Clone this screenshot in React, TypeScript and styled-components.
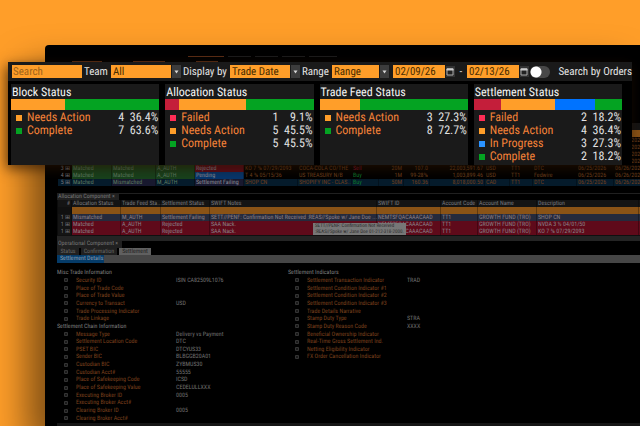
import React from "react";
import styled, { createGlobalStyle } from "styled-components";

const Global = createGlobalStyle`
  *, *::before, *::after { box-sizing: border-box; }
  body { margin: 0; background: #ff9e29; text-rendering: geometricPrecision; }
  button, input, select { font: inherit; margin: 0; padding: 0; border: 0; border-radius: 0; text-rendering: inherit; }
  table { border-collapse: collapse; border-spacing: 0; }
  h2, h3, dl, dd, dt, ul { margin: 0; padding: 0; font: inherit; }
  ul { list-style: none; }
`;

const sans = `"Roboto Condensed", Roboto, "Noto Sans", sans-serif`;

const Page = styled.main`
  position: relative;
  display: flex;
  min-height: 100vh;
  padding: 45px 0 0 45px;
  overflow: hidden;
  background: #ff9e29;
  font-family: ${sans};
`;

const Terminal = styled.section`
  flex: 1;
  min-width: 0;
  display: flex;
  flex-direction: column;
  padding-left: 12px;
  background: #000;
  border-top-left-radius: 4px;
  box-shadow: -18px 22px 36px 0 rgba(0, 0, 0, 0.5);
  font-size: 6px;
  line-height: 7px;
  color: #6a6a6a;
`;

const TopStrip = styled.div`
  flex: none;
  height: 78px;
  padding-top: 11px;
  display: flex;
  flex-direction: column;
  gap: 4px;
`;

const EdgeRow = styled.div<{ $inset: number; $gap: number }>`
  display: flex;
  gap: ${(p) => p.$gap}px;
  padding-left: ${(p) => p.$inset}px;
`;

const TabEdge = styled.span<{ $on?: boolean; $w: number }>`
  width: ${(p) => p.$w}px;
  height: 1px;
  background: ${(p) => (p.$on ? "#5a2c14" : "#1c1c1c")};
`;

const Grid = styled.table`
  table-layout: fixed;
  width: 100%;
  flex: none;
`;

type Tone = "plain" | "green" | "red" | "blue" | "navy" | "slate" | "filter" | "head" | "select";
const tones: Record<Tone, string> = {
  plain: "transparent",
  green: "#17431d",
  red: "#5f0a1a",
  blue: "#05376f",
  navy: "#191a30",
  slate: "#252a3c",
  filter: "#8a5316",
  head: "#141414",
  select: "#061c2c",
};

const Row = styled.tr<{ $tone?: Tone }>`
  height: 7px;
  background: ${(p) => tones[p.$tone ?? "plain"]};
`;

const Cell = styled.td<{ $tone?: Tone; $ink?: string; $right?: boolean }>`
  height: 7px;
  padding: 0 1px;
  white-space: nowrap;
  text-align: ${(p) => (p.$right ? "right" : "left")};
  color: ${(p) => p.$ink ?? "#77777c"};
  background: ${(p) => tones[p.$tone ?? "plain"]};
  border-left: 1px solid rgba(0, 0, 0, 0.3);
  line-height: 7px;
`;

const HeadCell = styled(Cell).attrs({ as: "th" })`
  font-weight: 400;
`;

const PanelTitle = styled.h2<{ $gap?: boolean }>`
  flex: none;
  display: flex;
  height: 7px;
  border-top: ${(p) => (p.$gap ? "1px solid #202020" : "0")};
  span {
    min-width: 56px;
    padding: 0 4px 0 1px;
    background: #202020;
    color: #777;
    line-height: 6px;
  }
`;

const Spacer = styled.div`
  flex: none;
  height: 7px;
`;

const ScrollBar = styled.div`
  flex: none;
  height: 5px;
  background: #242424;
`;

const AllocationBox = styled.div`
  flex: none;
  position: relative;
  height: 36px;
  background: #101010;
`;

const Tooltip = styled.div`
  position: absolute;
  left: 256px;
  top: 23px;
  padding: 0 2px;
  background: #777;
  color: #2b2b2b;
  font-size: 5px;
  line-height: 6px;
  white-space: nowrap;
`;

const Tabs = styled.div`
  flex: none;
  display: flex;
  gap: 2px;
  height: 7px;
`;

const Tab = styled.button<{ $on?: boolean }>`
  width: ${(p) => (p.$on ? 32 : 36)}px;
  height: 7px;
  line-height: 7px;
  color: ${(p) => (p.$on ? "#222" : "#666")};
  background: ${(p) => (p.$on ? "#606060" : "#202020")};
  &:first-child { width: 22px; }
`;

const SubBar = styled.div`
  flex: none;
  height: 8px;
  background: #464646;
  display: flex;
  h3 {
    width: 47px;
    padding-left: 3px;
    color: #8a9db0;
    background: #053b68;
    line-height: 8px;
    white-space: nowrap;
  }
`;

const Details = styled.div`
  flex: 1;
  display: grid;
  grid-template-columns: 231px minmax(0, 1fr);
  padding: 6px 0 1px;
`;

const FieldList = styled.dl`
  display: grid;
  grid-template-rows: repeat(20, minmax(7px, 1fr));
`;

const FieldHeading = styled.dt`
  color: #7e7e7e;
  align-self: center;
`;

const Field = styled.div`
  display: grid;
  grid-template-columns: 19px 100px minmax(0, 1fr);
  align-items: center;
  white-space: nowrap;
  svg { margin-left: 7px; }
  dt { color: #7c401d; }
  dd { color: #707070; }
`;

const FootBar = styled.div`
  flex: none;
  height: 3px;
  background: #161616;
`;

/* Filter and summary panel floating over the terminal */
const Overlay = styled.section`
  position: absolute;
  top: 62px;
  left: 8px;
  right: 8px;
  background: #000;
  box-shadow: -2px 4px 12px rgba(40, 18, 0, 0.7);
  color: #e2e2e2;
`;

const Toolbar = styled.form`
  display: flex;
  align-items: center;
  height: 19px;
  padding-left: 4px;
  background: #1a1a1a;
  font-size: 11px;
  line-height: 13px;
  white-space: nowrap;
`;

const SearchInput = styled.input`
  width: 70px;
  height: 13px;
  padding-left: 1px;
  background: #ff9e29;
  color: #3a2400;
  &::placeholder { color: #a0641a; opacity: 1; }
`;

const Caption = styled.label`
  padding: 0 3px 0 2px;
`;

const SelectBox = styled.span<{ $w: number }>`
  position: relative;
  display: flex;
  width: ${(p) => p.$w}px;
  height: 13px;
  select {
    appearance: none;
    width: 100%;
    height: 13px;
    padding: 0 10px 0 2px;
    background: linear-gradient(to left, #3c3c3c 9px, #1a1a1a 9px, #1a1a1a 10px, #ff9e29 10px);
    color: #4a2d00;
  }
  svg {
    position: absolute;
    right: 2px;
    top: 5px;
    pointer-events: none;
  }
`;

const DateBox = styled.span`
  display: flex;
  align-items: center;
  gap: 1px;
  input {
    width: 52px;
    height: 13px;
    padding-left: 2px;
    background: #ff9e29;
    color: #4a2d00;
  }
  button {
    display: flex;
    width: 9px;
    height: 11px;
    align-items: center;
    justify-content: center;
    background: #333;
  }
`;

const Dates = styled.div`
  display: flex;
  margin-left: 4px;
`;

const Dash = styled.span`
  width: 12px;
  text-align: center;
`;

const Switch = styled.label`
  display: flex;
  flex: 1;
  align-items: center;
  justify-content: space-between;
  padding-left: 1px;
  input {
    appearance: none;
    width: 20px;
    height: 12px;
    border-radius: 6px;
    background: radial-gradient(circle at 6px 6px, #fff 5px, #484848 6px);
  }
`;

const Cards = styled.div`
  display: grid;
  grid-template-columns: repeat(4, 1fr);
  column-gap: 6px;
  padding: 3px 10px 0 3px;
`;

const Card = styled.article`
  height: 81px;
  background: #1a1a1a;
  font-size: 12px;
`;

const CardTitle = styled.h2`
  height: 15px;
  padding: 1px 0 0 1px;
  color: #f4f4f4;
  line-height: 15px;
`;

const Bar = styled.div`
  display: flex;
  height: 11px;
`;

const Segment = styled.span<{ $color: string; $share: number }>`
  flex: ${(p) => p.$share} 0 0;
  background: ${(p) => p.$color};
`;

const Legend = styled.ul`
  padding-top: 1px;
`;

const LegendRow = styled.li<{ $color: string }>`
  display: grid;
  grid-template-columns: 11px 1fr auto 34px;
  align-items: center;
  height: 13px;
  padding: 0 1px 0 5px;
  line-height: 13px;
  &::before {
    content: "";
    width: 6px;
    height: 6px;
    background: ${(p) => p.$color};
  }
  span { color: #f58238; }
  b { font-weight: 400; text-align: right; }
`;

const Arrow = () => (
  <svg width="5" height="4" viewBox="0 0 5 4" aria-hidden="true">
    <path d="M0.5 0.5h4L2.5 3.5z" fill="#d8d8d8" />
  </svg>
);

const Calendar = () => (
  <svg width="8" height="9" viewBox="0 0 8 9" aria-hidden="true">
    <path d="M1 1.5h6v6.500H1z" fill="#222" stroke="#aaa" />
    <path d="M0.500 2h7v1.500h-7z" fill="#ccc" />
  </svg>
);

const FieldIcon = () => (
  <svg width="4" height="4" viewBox="0 0 4 4" aria-hidden="true">
    <path d="M0.5 0.5h3v3h-3zM1 2h2" fill="none" stroke="#343434" />
  </svg>
);

const FAIL = "#c41e3a";
const NEED = "#ff9e29";
const DONE = "#04a322";
const PROG = "#0073ff";

const dots: Record<string, string> = { [FAIL]: "#ff2d55", [PROG]: "#2b93ff" };

type Stat = [string, number, string, string];
const cards: { title: string; rows: Stat[] }[] = [
  { title: "Block Status", rows: [["Needs Action", 4, "36.4%", NEED], ["Complete", 7, "63.6%", DONE]] },
  {
    title: "Allocation Status",
    rows: [["Failed", 1, "9.1%", FAIL], ["Needs Action", 5, "45.5%", NEED], ["Complete", 5, "45.5%", DONE]],
  },
  { title: "Trade Feed Status", rows: [["Needs Action", 3, "27.3%", NEED], ["Complete", 8, "72.7%", DONE]] },
  {
    title: "Settlement Status",
    rows: [
      ["Failed", 2, "18.2%", FAIL],
      ["Needs Action", 4, "36.4%", NEED],
      ["In Progress", 3, "27.3%", PROG],
      ["Complete", 2, "18.2%", DONE],
    ],
  },
];

const tradeCols = [14, 40, 44, 39, 49, 54, 54, 27, 25, 26, 55, 25, 23, 44, 37];
const trades = [
  { no: "3", cells: ["Matched", "Matched", "A_AUTH", "Rejected", "KO 7 ⅜ 07/29/2093", "COCA-COLA CO/THE", "Sell", "20M", "107.0", "22,003,591.67", "USD", "TT1", "DTC", "06/25/2026", "06/26/202"], tone: "red" as Tone },
  { no: "4", cells: ["Matched", "Matched", "A_AUTH", "Pending", "T 4 ⅜ 05/15/36", "US TREASURY N/B", "Buy", "1M", "99-28⅜", "1,003,899.46", "USD", "TT1", "Fedwire", "06/25/2026", "06/26/202"], tone: "blue" as Tone },
  { no: "5", cells: ["Matched", "Mismatched", "M_AUTH", "Settlement Failing", "SHOP CN", "SHOPIFY INC - CLAS..", "Buy", "50M", "160.36", "8,018,000.50", "CAD", "TT1", "DTC", "06/25/2026", "06/26/202"], tone: "navy" as Tone },
];

const allocCols = [14, 49, 40, 49, 167, 64, 37, 59, 102];
const allocHeads = ["Allocation Status", "Trade Feed Sta...", "Settlement Status", "SWIFT Notes", "SWIFT ID", "Account Code", "Account Name", "Description"];
const allocs = [
  ["Mismatched", "M_AUTH", "Settlement Failing", "SETT//PENF: Confirmation Not Received :REAS//Spoke w/ Jane Doe ...", "NEMTSFQACAAACAAD", "TT1", "GROWTH FUND (TRO)", "SHOP CN"],
  ["Matched", "A_AUTH", "Rejected", "SAA Nack.", "NEMTSFQACAAACAAD", "TT1", "GROWTH FUND (TRO)", "NVDA 3 ½ 04/01/50"],
  ["Matched", "A_AUTH", "Rejected", "SAA Nack.", "NEMTSFQACAAACAAD", "TT1", "GROWTH FUND (TRO)", "KO 7 ⅜ 07/29/2093"],
];

type Entry = [string, string?] | string;
const leftFields: Entry[] = [
  "Misc Trade Information",
  ["Security ID", "ISIN CA82509L1076"], ["Place of Trade Code"], ["Place of Trade Value"],
  ["Currency to Transact", "USD"], ["Trade Processing Indicator"], ["Trade Linkage"],
  "Settlement Chain Information",
  ["Message Type", "Delivery vs Payment"], ["Settlement Location Code", "DTC"], ["PSET BIC", "DTCYUS33"],
  ["Sender BIC", "BLBGGB20A01"], ["Custodian BIC", "ZYBMUS30"], ["Custodian Acct#", "55555"],
  ["Place of Safekeeping Code", "ICSD"], ["Place of Safekeeping Value", "CEDELULLXXX"],
  ["Executing Broker ID", "0005"], ["Executing Broker Acct#"], ["Clearing Broker ID", "0005"], ["Clearing Broker Acct#"],
];
const rightFields: Entry[] = [
  "Settlement Indicators",
  ["Settlement Transaction Indicator", "TRAD"], ["Settlement Condition Indicator #1"],
  ["Settlement Condition Indicator #2"], ["Settlement Condition Indicator #3"], ["Trade Details Narrative"],
  ["Stamp Duty Type", "STRA"], ["Stamp Duty Reason Code", "XXXX"], ["Beneficial Ownership Indicator"],
  ["Real-Time Gross Settlement Ind."], ["Netting Eligibility Indicator"], ["FX Order Cancellation Indicator"],
];

const Fields = ({ items }: { items: Entry[] }) => (
  <FieldList>
    {items.map((it) =>
      typeof it === "string" ? (
        <FieldHeading key={it}>{it}</FieldHeading>
      ) : (
        <Field key={it[0]}>
          <FieldIcon />
          <dt>{it[0]}</dt>
          <dd>{it[1]}</dd>
        </Field>
      )
    )}
  </FieldList>
);

const Cols = ({ widths }: { widths: number[] }) => (
  <colgroup>
    {widths.map((w, i) => <col key={i} width={w} />)}
    <col />
  </colgroup>
);

const inkFor = (i: number, cell: string) => {
  if (i < 4) return i === 3 ? "#8d8d98" : "#5f7d63";
  if (cell === "Sell") return "#86132c";
  if (cell === "Buy") return "#0b7a2e";
  return "#70401f";
};

const Choice = ({ id, label, value, w }: { id: string; label: string; value: string; w: number }) => (
  <>
    <Caption htmlFor={id}>{label}</Caption>
    <SelectBox $w={w}>
      <select id={id} defaultValue={value}>
        <option>{value}</option>
      </select>
      <Arrow />
    </SelectBox>
  </>
);

const DateField = ({ label, value }: { label: string; value: string }) => (
  <DateBox>
    <input aria-label={label} defaultValue={value} />
    <button type="button" aria-label={`${label} calendar`}><Calendar /></button>
  </DateBox>
);

export default function App() {
  return (
    <>
      <Global />
      <Page>
        <Terminal>
          <TopStrip>
            <EdgeRow $inset={131} $gap={4}>
              <TabEdge $on $w={36} />
              {[23, 23, 23, 28].map((w, i) => <TabEdge key={i} $w={w} />)}
            </EdgeRow>
            <EdgeRow $inset={15} $gap={31}>
              <TabEdge $on $w={30} /><TabEdge $on $w={32} /><TabEdge $on $w={22} />
            </EdgeRow>
          </TopStrip>
          <Grid>
            <Cols widths={tradeCols} />
            <tbody>
              <Row $tone="head">
                {tradeCols.map((_, i) => <HeadCell key={i} />)}
                <HeadCell />
              </Row>
              <Row $tone="filter"><Cell colSpan={16} /></Row>
              {[0, 1, 2, 3].map((n) => (
                <Row key={n}>
                  <Cell colSpan={15} />
                  <Cell $ink="#70401f">06/26/202</Cell>
                </Row>
              ))}
              {trades.map((t, r) => (
                <Row key={t.no} $tone={r === 2 ? "select" : "plain"}>
                  <Cell $right>{t.no} ⊞</Cell>
                  {t.cells.map((c, i) => (
                    <Cell
                      key={i}
                      $ink={inkFor(i, c)}
                      $right={i >= 7 && i <= 9}
                      $tone={i === 3 ? t.tone : i < 3 ? (r === 2 ? (i === 1 ? "navy" : "plain") : "green") : "plain"}
                    >
                      {c}
                    </Cell>
                  ))}
                </Row>
              ))}
            </tbody>
          </Grid>
          <Spacer />
          <PanelTitle $gap><span>Allocation Component ×</span></PanelTitle>
          <AllocationBox>
            <Grid>
              <Cols widths={allocCols} />
              <tbody>
                <Row $tone="head">
                  <HeadCell $right>#</HeadCell>
                  {allocHeads.map((h) => <HeadCell key={h}>{h}</HeadCell>)}
                  <HeadCell />
                </Row>
                <Row>
                  <Cell />
                  {allocCols.map((_, i) => <Cell key={i} $tone="filter" />)}
                </Row>
                {allocs.map((a, r) => (
                  <Row key={r} $tone={r === 0 ? "slate" : "red"}>
                    <Cell $right $tone="head">1 ⊞</Cell>
                    {a.map((c, i) => <Cell key={i} $ink="#8a8088">{c}</Cell>)}
                    <Cell />
                  </Row>
                ))}
              </tbody>
            </Grid>
            <Tooltip role="tooltip">
              SETT//PENF: Confirmation Not Received<br />
              :REAS//Spoke w/ Jane Doe 01-212-318-2000.
            </Tooltip>
          </AllocationBox>
          <ScrollBar />
          <PanelTitle><span>Operational Component ×</span></PanelTitle>
          <Tabs>
            <Tab>Status</Tab>
            <Tab>Confirmation</Tab>
            <Tab $on>Settlement</Tab>
          </Tabs>
          <SubBar><h3>Settlement Details</h3></SubBar>
          <Details>
            <Fields items={leftFields} />
            <Fields items={rightFields} />
          </Details>
          <FootBar />
        </Terminal>

        <Overlay>
          <Toolbar>
            <SearchInput aria-label="Search" placeholder="Search" />
            <Choice id="team" label="Team" value="All" w={70} />
            <Choice id="display" label="Display by" value="Trade Date" w={70} />
            <Choice id="range" label="Range" value="Range" w={57} />
            <Dates>
              <DateField label="From" value="02/09/26" />
              <Dash>-</Dash>
              <DateField label="To" value="02/13/26" />
            </Dates>
            <Switch>
              <input type="checkbox" role="switch" />
              Search by Orders
            </Switch>
          </Toolbar>
          <Cards>
            {cards.map((c) => (
              <Card key={c.title}>
                <CardTitle>{c.title}</CardTitle>
                <Bar>
                  {c.rows.map((r) => <Segment key={r[0]} $color={r[3]} $share={r[1]} />)}
                </Bar>
                <Legend>
                  {c.rows.map((r) => (
                    <LegendRow key={r[0]} $color={dots[r[3]] ?? r[3]}>
                      <span>{r[0]}</span>
                      <b>{r[1]}</b>
                      <b>{r[2]}</b>
                    </LegendRow>
                  ))}
                </Legend>
              </Card>
            ))}
          </Cards>
        </Overlay>
      </Page>
    </>
  );
}
